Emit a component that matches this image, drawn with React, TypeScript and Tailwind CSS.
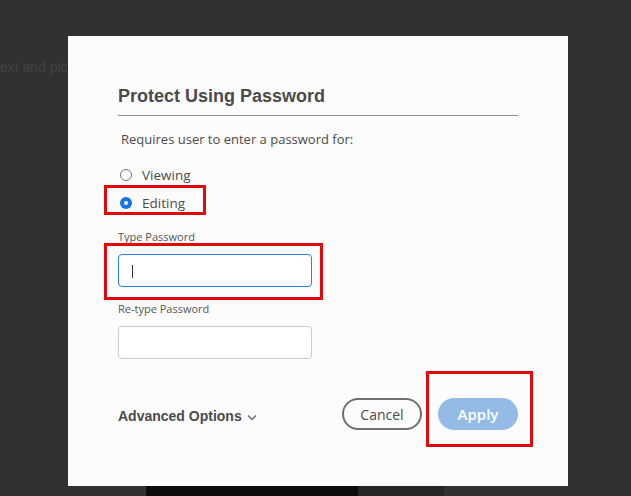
import { useState } from 'react';

const body = { fontFamily: '"Open Sans", "Noto Sans", sans-serif' };
const heading = { fontFamily: '"Liberation Sans", Arial, sans-serif' };

function Radio({ label, checked, onSelect }: { label: string; checked: boolean; onSelect: () => void }) {
  return (
    <button type="button" onClick={onSelect} className="flex h-5 items-center gap-[10px] pl-[2px] text-left">
      {checked ? (
        <span className="flex h-3 w-3 items-center justify-center rounded-full bg-[#1473e6]">
          <span className="h-1 w-1 rounded-full bg-white" />
        </span>
      ) : (
        <span className="h-3 w-3 rounded-full border-[1.5px] border-[#747474] bg-white" />
      )}
      <span className="text-[13.5px] leading-5 text-[#4b4b4b]" style={body}>
        {label}
      </span>
    </button>
  );
}

export default function App() {
  const [mode, setMode] = useState<'view' | 'edit'>('edit');
  const [password, setPassword] = useState('');
  const [confirm, setConfirm] = useState('');

  return (
    <div className="relative h-[496px] w-[631px] overflow-hidden bg-[#313131]">
      {/* page behind the modal */}
      <div className="absolute left-0 top-[57px] text-[14px] text-[#434343] blur-[0.5px]" style={heading}>
        ext and pict
      </div>
      <div className="absolute bottom-0 left-[146px] h-[10px] w-[212px] bg-[#0c0c0c]" />
      <div className="absolute bottom-0 left-[358px] h-[10px] w-[86px] bg-[#262626]" />

      <div className="relative ml-[68px] mt-[36px] h-[450px] w-[500px] bg-[#fcfcfc] px-[50px] pt-[49px]">
        <h1 className="text-[18px] font-bold leading-[22px] text-[#4b4b4b]" style={heading}>
          Protect Using Password
        </h1>
        <div className="mt-[8px] h-px w-full bg-[#8f8f8f]" />

        <p className="mt-[13px] pl-[3px] text-[13px] leading-5 text-[#4b4b4b]" style={body}>
          Requires user to enter a password for:
        </p>

        <div className="mt-[16px] flex flex-col gap-[8px]">
          <Radio label="Viewing" checked={mode === 'view'} onSelect={() => setMode('view')} />
          <Radio label="Editing" checked={mode === 'edit'} onSelect={() => setMode('edit')} />
        </div>

        <label className="mt-[16px] block text-[11px] leading-4 text-[#555]" style={body}>
          Type Password
        </label>
        <div className="relative mt-[9px] h-[33px] w-[194px] rounded-[4px] border border-[#2680eb] bg-white">
          <input
            type="password"
            value={password}
            onChange={(e) => setPassword(e.target.value)}
            className="h-full w-full rounded-[4px] bg-transparent px-[13px] text-[14px] outline-none"
          />
          {password === '' && <span className="absolute left-[13px] top-[10px] h-[13px] w-px bg-[#333]" />}
        </div>

        <label className="mt-[14px] block text-[11px] leading-4 text-[#555]" style={body}>
          Re-type Password
        </label>
        <input
          type="password"
          value={confirm}
          onChange={(e) => setConfirm(e.target.value)}
          className="mt-[9px] block h-[33px] w-[194px] rounded-[4px] border border-[#cacaca] bg-white px-[13px] text-[14px] outline-none"
        />

        <div className="mt-[39px] flex items-center justify-between">
          <button type="button" className="flex items-center gap-[5px] pt-[4px] text-[14px] font-bold text-[#4b4b4b]" style={heading}>
            Advanced Options
            <svg width="10" height="7" viewBox="0 0 10 7" fill="none" className="mt-[2px]">
              <path d="M1 1.5l4 4 4-4" stroke="#6e6e6e" strokeWidth="1.5" />
            </svg>
          </button>
          <div className="flex items-center gap-4">
            <button
              type="button"
              className="h-[32px] w-[80px] rounded-full border-2 border-[#707070] text-[14px] text-[#4b4b4b]"
              style={body}
            >
              Cancel
            </button>
            <button
              type="button"
              className="h-[32px] w-[80px] rounded-full bg-[#93bbe6] text-[15px] font-semibold text-white"
              style={body}
            >
              Apply
            </button>
          </div>
        </div>

        {/* red annotation boxes */}
        <div className="pointer-events-none absolute left-[36px] top-[149px] h-[30px] w-[102px] border-[3px] border-[#e20a0a]" />
        <div className="pointer-events-none absolute left-[36px] top-[207px] h-[57px] w-[219px] border-[3px] border-[#e20a0a]" />
        <div className="pointer-events-none absolute left-[358px] top-[335px] h-[76px] w-[107px] border-[3px] border-[#e20a0a]" />
      </div>
    </div>
  );
}
